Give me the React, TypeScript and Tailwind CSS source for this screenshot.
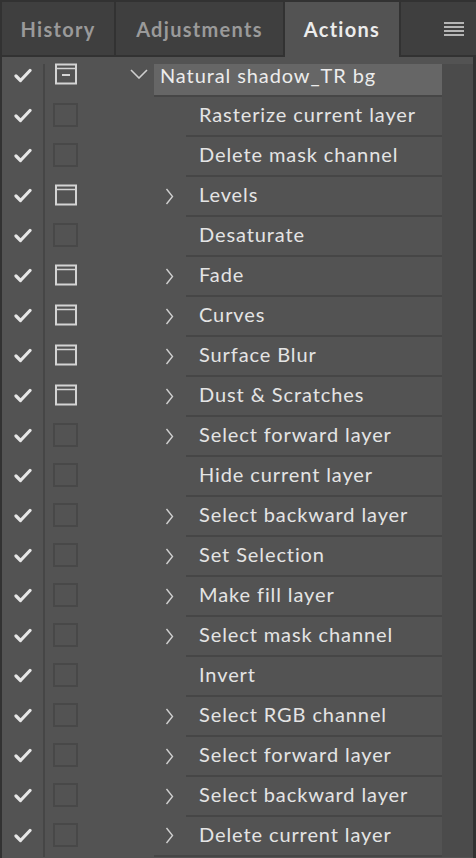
import React from 'react';

type Row = { name: string; icon: 'empty' | 'dialog'; expandable: boolean };

const rows: Row[] = [
  { name: 'Rasterize current layer', icon: 'empty', expandable: false },
  { name: 'Delete mask channel', icon: 'empty', expandable: false },
  { name: 'Levels', icon: 'dialog', expandable: true },
  { name: 'Desaturate', icon: 'empty', expandable: false },
  { name: 'Fade', icon: 'dialog', expandable: true },
  { name: 'Curves', icon: 'dialog', expandable: true },
  { name: 'Surface Blur', icon: 'dialog', expandable: true },
  { name: 'Dust & Scratches', icon: 'dialog', expandable: true },
  { name: 'Select forward layer', icon: 'empty', expandable: true },
  { name: 'Hide current layer', icon: 'empty', expandable: false },
  { name: 'Select backward layer', icon: 'empty', expandable: true },
  { name: 'Set Selection', icon: 'empty', expandable: true },
  { name: 'Make fill layer', icon: 'empty', expandable: true },
  { name: 'Select mask channel', icon: 'empty', expandable: true },
  { name: 'Invert', icon: 'empty', expandable: false },
  { name: 'Select RGB channel', icon: 'empty', expandable: true },
  { name: 'Select forward layer', icon: 'empty', expandable: true },
  { name: 'Select backward layer', icon: 'empty', expandable: true },
  { name: 'Delete current layer', icon: 'empty', expandable: true },
];

function Check() {
  return (
    <svg width="18" height="15" viewBox="0 0 18 15" fill="none">
      <path d="M2 8 L6.5 12.5 L16 2.5" stroke="#e6e6e6" strokeWidth="3.2" strokeLinecap="round" strokeLinejoin="round" />
    </svg>
  );
}

function DialogIcon({ dash }: { dash?: boolean }) {
  return (
    <svg width="24" height="22" viewBox="0 0 24 22" fill="none">
      <rect x="2" y="1.5" width="20" height="19" stroke="#d4d4d4" strokeWidth="2" />
      <line x1="2" y1="5.5" x2="22" y2="5.5" stroke="#d4d4d4" strokeWidth="1.5" />
      {dash && <line x1="8" y1="12" x2="16" y2="12" stroke="#d4d4d4" strokeWidth="2" />}
    </svg>
  );
}

function ChevronRight() {
  return (
    <svg width="9" height="17" viewBox="0 0 9 17" fill="none">
      <path d="M1.5 1 L7.5 8.5 L1.5 16" stroke="#cfcfcf" strokeWidth="1.4" />
    </svg>
  );
}

function ChevronDown() {
  return (
    <svg width="18" height="10" viewBox="0 0 18 10" fill="none">
      <path d="M1 1 L9 9 L17 1" stroke="#cfcfcf" strokeWidth="1.6" />
    </svg>
  );
}

export default function App() {
  return (
    <div
      className="w-[476px] h-[858px] bg-[#323232] overflow-hidden flex flex-col"
      style={{ fontFamily: 'Lato, "Open Sans", sans-serif' }}
    >
      {/* Tabs */}
      <div className="flex h-[57px] pt-[2px] pl-[2px] gap-[2px] shrink-0">
        <div className="w-[112px] mb-[2px] bg-[#3f3f3f] flex items-center justify-center text-[20px] font-bold text-[#9a9a9a] tracking-[1.3px]">
          History
        </div>
        <div className="w-[167px] mb-[2px] bg-[#3f3f3f] flex items-center justify-center text-[20px] font-bold text-[#9a9a9a] tracking-[1.3px]">
          Adjustments
        </div>
        <div className="w-[114px] bg-[#535353] flex items-center justify-center text-[20px] font-bold text-[#ececec] tracking-[1.3px] pb-[2px]">
          Actions
        </div>
        <div className="w-[75px] mb-[2px] bg-[#3f3f3f] flex items-center justify-end pr-[12px]">
          <div className="flex flex-col gap-[2px] w-[20px]">
            <div className="h-[2px] bg-[#b5b5b5]" />
            <div className="h-[2px] bg-[#b5b5b5]" />
            <div className="h-[2px] bg-[#b5b5b5]" />
            <div className="h-[2px] bg-[#b5b5b5]" />
          </div>
        </div>
      </div>

      {/* Body */}
      <div className="flex-1 ml-[2px] mr-[3px] bg-[#535353] flex flex-col text-[20px] text-[#e4e4e4] tracking-[0.9px]">
        {/* group header */}
        <div className="flex h-[40px] shrink-0">
          <div className="w-[41px] flex items-center justify-center pb-[4px]">
            <Check />
          </div>
          <div className="w-[2px] mt-[7px] bg-[#464646]" />
          <div className="w-[85px] flex items-center pl-[9px] pb-[6px]">
            <DialogIcon dash />
          </div>
          <div className="w-[24px] flex items-center pb-[6px]">
            <ChevronDown />
          </div>
          <div className="w-[288px] mt-[7px] bg-[#666666] border-b-2 border-[#464646] flex items-center pl-[6px] pb-[10px] text-[#ececec]">
            Natural shadow_TR bg
          </div>
          <div className="flex-1 mt-[7px] bg-[#4b4b4b]" />
        </div>

        {rows.map((r, i) => {
          const last = i === rows.length - 1;
          return (
            <div key={i} className="flex h-[40px] shrink-0">
              <div className="w-[41px] flex items-center justify-center pb-[4px]">
                <Check />
              </div>
              <div className="w-[2px] bg-[#464646]" />
              <div className="w-[109px] flex items-center pl-[8px] pb-[4px]">
                {r.icon === 'dialog' ? (
                  <div className="pl-[1px]">
                    <DialogIcon />
                  </div>
                ) : (
                  <div className="w-[25px] h-[24px] border-2 border-[#484848]" />
                )}
              </div>
              <div className={'w-[32px] flex items-center pl-[11px] pb-[2px] ' + (last ? 'border-b-2 border-[#464646]' : '')}>
                {r.expandable && <ChevronRight />}
              </div>
              <div className="w-[256px] border-b-2 border-[#464646] flex items-center pl-[13px] pb-[4px]">
                {r.name}
              </div>
              <div className="flex-1 bg-[#4b4b4b]" />
            </div>
          );
        })}
      </div>
    </div>
  );
}
